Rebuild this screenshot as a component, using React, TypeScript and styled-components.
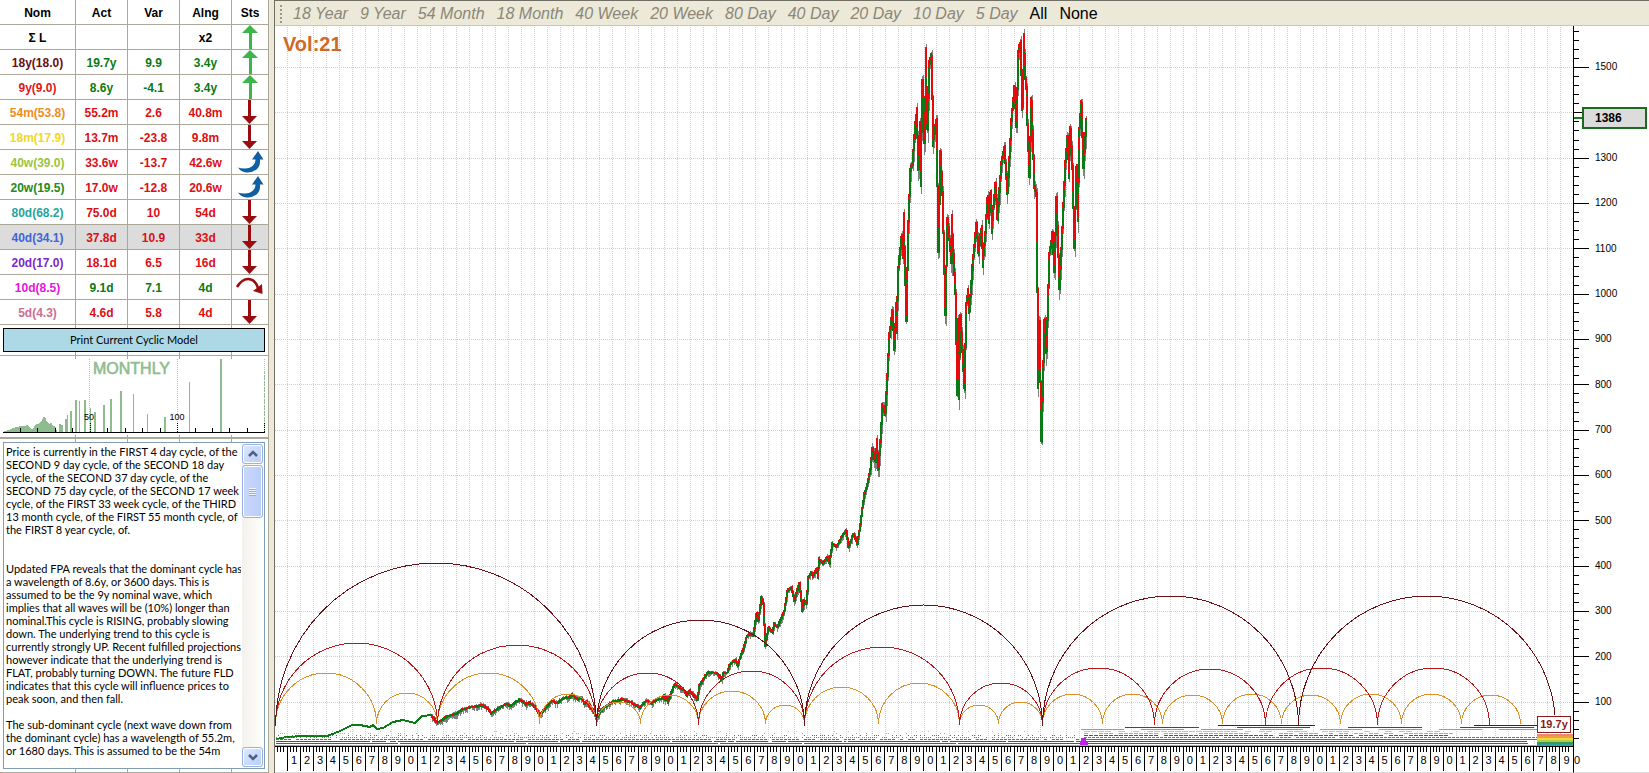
import React from 'react';
import styled, { createGlobalStyle } from 'styled-components';

const GlobalStyle = createGlobalStyle`
  * { box-sizing: border-box; }
  html, body, #root { height: 100%; }
  body {
    margin: 0;
    background: #ece9d8;
    color: #000;
    font-family: "Liberation Sans", Arial, sans-serif;
  }
  button { font-family: inherit; }
`;

const LINE = '#aca899';

/* ---------- window ---------- */

const Window = styled.div`
  display: flex;
  min-height: 100%;
  height: 100vh;
  overflow: hidden;
`;

const SidePane = styled.aside`
  flex: 0 0 269px;
  display: flex;
  flex-direction: column;
  border-right: 1px solid ${LINE};
  border-bottom: 1px solid ${LINE};
  background:
    linear-gradient(${LINE}, ${LINE}) 75px 0 / 1px 100% no-repeat,
    linear-gradient(${LINE}, ${LINE}) 127px 0 / 1px 100% no-repeat,
    linear-gradient(${LINE}, ${LINE}) 179px 0 / 1px 100% no-repeat,
    linear-gradient(${LINE}, ${LINE}) 231px 0 / 1px 100% no-repeat,
    #fff;
`;

const ChartPane = styled.main`
  flex: 1;
  min-width: 0;
  display: flex;
  flex-direction: column;
  margin-left: 5px;
  border-left: 1px solid #716f64;
  border-top: 1px solid #716f64;
  background: #fff;
`;

/* ---------- cycle table ---------- */

const CycleTable = styled.table`
  width: 268px;
  table-layout: fixed;
  border-collapse: separate;
  border-spacing: 0;
  background: #fff;
  font-size: 12px;
  line-height: 14px;
`;

const Col = styled.col<{ $w: number }>`
  width: ${p => p.$w}px;
`;

const HeadCell = styled.th`
  height: 25px;
  padding: 2px 0 0;
  border-right: 1px solid ${LINE};
  border-bottom: 1px solid ${LINE};
  font-weight: 700;
  text-align: center;
  &:last-child { border-right: 0; }
`;

const Row = styled.tr<{ $selected?: boolean }>`
  background: ${p => (p.$selected ? '#dcdcdc' : '#fff')};
`;

const Cell = styled.td<{ $color?: string }>`
  height: 25px;
  padding: 2px 0 0;
  border-right: 1px solid ${LINE};
  border-bottom: 1px solid ${LINE};
  color: ${p => p.$color || '#000'};
  font-weight: 700;
  text-align: center;
`;

const IconCell = styled.td`
  height: 25px;
  padding: 0;
  border-bottom: 1px solid ${LINE};
`;

const StatusIcon = styled.svg`
  display: block;
  width: 36px;
  height: 24px;
`;

type Status = 'up' | 'down' | 'turnUp' | 'turnDown';

function StatusArrow({ kind }: { kind: Status }) {
  return (
    <StatusIcon viewBox="0 0 36 24" role="img" aria-label={kind}>
      {kind === 'up' && <path fill="#3cb54a" d="M18 0 26 8H20V24H17V8H10Z" />}
      {kind === 'down' && <path fill="#990d10" d="M16 0H19V16H25L17.5 24 10 16H16Z" />}
      {kind === 'turnUp' && (
        <path fill="#0f5fa5" d="M6 17.500Q8 18.500 13 18.500Q18 18.500 21 15.500Q23.500 13 23.500 9.500H20L26 1L31.500 9.500H28Q28.500 16 24.500 19.500Q20 23 14.500 22.500Q9 22 6 17.500Z" />
      )}
      {kind === 'turnDown' && (
        <>
          <path fill="none" stroke="#990d10" strokeWidth="2.500" d="M5 12Q10 4 16 4Q23 4 26 13" />
          <path fill="#990d10" d="M21 16 30 9 30.500 19Z" />
        </>
      )}
    </StatusIcon>
  );
}

const G = '#0a7a14';
const R = '#dc0f14';

type Cycle = { nom: string; c: string; act: string; vr: string; al: string; v: string; st: Status; sel?: boolean };

const cycles: Cycle[] = [
  { nom: '18y(18.0)', c: '#6b0f12', act: '19.7y', vr: '9.9', al: '3.4y', v: G, st: 'up' },
  { nom: '9y(9.0)', c: '#e01818', act: '8.6y', vr: '-4.1', al: '3.4y', v: G, st: 'up' },
  { nom: '54m(53.8)', c: '#f08c1e', act: '55.2m', vr: '2.6', al: '40.8m', v: R, st: 'down' },
  { nom: '18m(17.9)', c: '#f2d81e', act: '13.7m', vr: '-23.8', al: '9.8m', v: R, st: 'down' },
  { nom: '40w(39.0)', c: '#9cc43c', act: '33.6w', vr: '-13.7', al: '42.6w', v: R, st: 'turnUp' },
  { nom: '20w(19.5)', c: '#228b22', act: '17.0w', vr: '-12.8', al: '20.6w', v: R, st: 'turnUp' },
  { nom: '80d(68.2)', c: '#28a4a0', act: '75.0d', vr: '10', al: '54d', v: R, st: 'down' },
  { nom: '40d(34.1)', c: '#4164dc', act: '37.8d', vr: '10.9', al: '33d', v: R, st: 'down', sel: true },
  { nom: '20d(17.0)', c: '#7d28c8', act: '18.1d', vr: '6.5', al: '16d', v: R, st: 'down' },
  { nom: '10d(8.5)', c: '#e614dc', act: '9.1d', vr: '7.1', al: '4d', v: G, st: 'turnDown' },
  { nom: '5d(4.3)', c: '#cd6e91', act: '4.6d', vr: '5.8', al: '4d', v: R, st: 'down' },
];

function Cycles() {
  return (
    <CycleTable>
      <colgroup>
        <Col $w={76} /><Col $w={52} /><Col $w={52} /><Col $w={52} /><Col $w={36} />
      </colgroup>
      <thead>
        <tr>
          {['Nom', 'Act', 'Var', 'Alng', 'Sts'].map(h => <HeadCell key={h} scope="col">{h}</HeadCell>)}
        </tr>
      </thead>
      <tbody>
        <Row>
          <Cell>Σ L</Cell><Cell /><Cell /><Cell>x2</Cell>
          <IconCell><StatusArrow kind="up" /></IconCell>
        </Row>
        {cycles.map(c => (
          <Row key={c.nom} $selected={c.sel}>
            <Cell $color={c.c}>{c.nom}</Cell>
            <Cell $color={c.v}>{c.act}</Cell>
            <Cell $color={c.v}>{c.vr}</Cell>
            <Cell $color={c.v}>{c.al}</Cell>
            <IconCell><StatusArrow kind={c.st} /></IconCell>
          </Row>
        ))}
      </tbody>
    </CycleTable>
  );
}

const PrintRow = styled.div`
  flex: none;
  display: flex;
  padding: 3px;
  border-bottom: 1px solid ${LINE};
`;

const PrintButton = styled.button`
  flex: 1;
  height: 24px;
  padding: 0;
  border: 1px solid #000;
  border-radius: 0;
  background: #add8e6;
  color: #000;
  font-family: Lato, "Liberation Sans", sans-serif;
  font-size: 11px;
  line-height: 14px;
`;

/* ---------- spectrum ---------- */

const SpectrumBox = styled.div`
  flex: none;
  padding: 3px 0 2px;
  border-bottom: 2px solid ${LINE};
`;

const SpectrumSvg = styled.svg`
  display: block;
  width: 268px;
  height: 76px;
  background: #fff;
  font-family: "Liberation Sans", Arial, sans-serif;
`;

const humps: [number, number][] = [
  [5, 431], [9, 430], [13, 428], [17, 427], [20, 426], [24, 426], [27, 425], [30, 428], [32, 430],
  [36, 424], [38, 424], [40, 422], [42, 420], [44, 416], [46, 419], [47, 422], [49, 424], [51, 422], [53, 426], [56, 427],
];
const spikes: [number, number, number][] = [
  [59, 424, 2], [61, 425, 2], [65, 419, 2], [67, 415, 1], [70, 411, 2], [75, 400, 2], [79, 401, 1], [84, 400, 2],
  [90, 408, 1], [94, 412, 2], [103, 405, 2], [110, 399, 2], [120, 391, 2], [133, 394, 1], [147, 414, 1],
  [164, 417, 2], [189, 382, 1], [220, 359, 2],
];

function Spectrum() {
  const area = `M3 432 ${humps.map(([x, y]) => `L${x} ${y}`).join(' ')} L57 432 Z`;
  return (
    <SpectrumBox>
      <SpectrumSvg viewBox="0 359 268 76" shapeRendering="crispEdges">
        {[89, 177, 264].map(x => (
          <line key={x} x1={x + 0.5} x2={x + 0.5} y1="359" y2="432" stroke="#bdbdbd" strokeDasharray="1 1" />
        ))}
        <path d={area} fill="#8fbc8f" />
        {spikes.map(([x, y, w]) => <rect key={x} x={x} y={y} width={w} height={432 - y} fill="#8fbc8f" />)}
        <line x1="264.5" x2="264.5" y1="372" y2="432" stroke="#8fbc8f" strokeDasharray="2 1" />
        <rect x="3" y="432" width="262" height="1" />
        {Array.from({ length: 15 }, (_, i) => {
          const x = Math.round(20 + i * 17.45);
          const tall = i % 5 === 4;
          return (
            <line key={i} x1={x + 0.5} x2={x + 0.5} y1={tall ? 423 : 428} y2="432" stroke="#000" strokeDasharray={tall ? '1 1' : undefined} />
          );
        })}
        <text x="93" y="374" fontSize="16" fill="#8fbc8f" stroke="#8fbc8f" strokeWidth="0.600">MONTHLY</text>
        <text x="89" y="420" fontSize="9" textAnchor="middle">50</text>
        <text x="177" y="420" fontSize="9" textAnchor="middle">100</text>
      </SpectrumSvg>
    </SpectrumBox>
  );
}

/* ---------- analysis text ---------- */

const NotesFrame = styled.div`
  flex: 1;
  min-height: 0;
  display: flex;
  margin: 3px;
  border: 1px solid #7f9db9;
  background: #fff;
`;

const Notes = styled.textarea`
  flex: 1;
  min-width: 0;
  margin: 0 0 5px;
  padding: 2px 0 0 2px;
  border: 0;
  outline: 0;
  resize: none;
  overflow: hidden;
  white-space: pre;
  background: #fff;
  color: #000;
  font-family: Lato, "Liberation Sans", sans-serif;
  font-size: 11px;
  line-height: 13px;
`;

const ScrollTrack = styled.div`
  flex: 0 0 21px;
  display: flex;
  flex-direction: column;
  margin: 1px;
  background: linear-gradient(90deg, #f3f1ec, #fefefb);
`;

const ScrollButton = styled.button`
  flex: none;
  display: grid;
  place-items: center;
  height: 20px;
  padding: 0;
  border: 1px solid #98b1e4;
  border-radius: 3px;
  box-shadow: inset 0 0 0 1px #fff;
  background: linear-gradient(135deg, #dfe9fe, #b9cdfa);
`;

const ScrollThumb = styled.div`
  flex: none;
  display: grid;
  place-items: center;
  height: 53px;
  margin-top: 1px;
  margin-bottom: auto;
  border: 1px solid #98b1e4;
  border-radius: 3px;
  box-shadow: inset 0 0 0 1px #fff;
  background: linear-gradient(90deg, #cad8fc, #b9cdfa);
`;

const ScrollGrip = styled.span`
  width: 7px;
  height: 8px;
  background: repeating-linear-gradient(#eef4fe 0 1px, #8cb0f8 1px 2px);
`;

function Chevron({ up }: { up?: boolean }) {
  return (
    <svg width="10" height="8" viewBox="0 0 10 8" fill="none" stroke="#4d6185" strokeWidth="2.500">
      <path d={up ? 'M1 6 5 2 9 6' : 'M1 2 5 6 9 2'} />
    </svg>
  );
}

const notes = `Price is currently in the FIRST 4 day cycle, of the
SECOND 9 day cycle, of the SECOND 18 day
cycle, of the SECOND 37 day cycle, of the
SECOND 75 day cycle, of the SECOND 17 week
cycle, of the FIRST 33 week cycle, of the THIRD
13 month cycle, of the FIRST 55 month cycle, of
the FIRST 8 year cycle, of.


Updated FPA reveals that the dominant cycle has
a wavelength of 8.6y, or 3600 days. This is
assumed to be the 9y nominal wave, which
implies that all waves will be (10%) longer than
nominal.This cycle is RISING, probably slowing
down. The underlying trend to this cycle is
currently strongly UP. Recent fulfilled projections
however indicate that the underlying trend is
FLAT, probably turning DOWN. The future FLD
indicates that this cycle will influence prices to
peak soon, and then fall.

The sub-dominant cycle (next wave down from
the dominant cycle) has a wavelength of 55.2m,
or 1680 days. This is assumed to be the 54m`;

/* ---------- toolbar ---------- */

const Toolbar = styled.div`
  flex: none;
  display: flex;
  align-items: center;
  gap: 12px;
  height: 25px;
  padding: 2px 0 0 5px;
  overflow: hidden;
  border-bottom: 1px solid #c5c8b4;
  background: #ece9d8;
`;

const Grip = styled.span`
  width: 2px;
  height: 18px;
  margin-right: -1px;
  background: repeating-linear-gradient(#9b9886 0 2px, transparent 2px 4px);
`;

const CycleButton = styled.button<{ $plain?: boolean }>`
  flex: none;
  padding: 0;
  border: 0;
  background: none;
  color: ${p => (p.$plain ? '#000' : '#8a8778')};
  font-size: 16px;
  line-height: 20px;
  font-style: ${p => (p.$plain ? 'normal' : 'italic')};
`;

/* ---------- chart ---------- */

const ChartGrid = styled.div`
  flex: 1;
  min-height: 0;
  display: grid;
  grid-template-columns: minmax(0, 1fr) 76px;
  grid-template-rows: minmax(0, 1fr) 27px;
`;

const Plot = styled.div`
  position: relative;
  min-height: 0;
`;

const PlotSvg = styled.svg`
  display: block;
  width: 100%;
  height: 100%;
`;

const VolumeLabel = styled.div`
  position: absolute;
  left: 8px;
  top: 7px;
  color: #cd6a28;
  font-size: 20px;
  line-height: 22px;
  font-weight: 700;
`;

const CycleTag = styled.div`
  position: absolute;
  right: 2px;
  bottom: 13px;
  width: 34px;
  height: 17px;
  border: 1px solid #8b1a1a;
  background: #fff;
  color: #8b1a1a;
  font-size: 11px;
  line-height: 15px;
  font-weight: 700;
  text-align: center;
`;

const PriceAxis = styled.div`
  position: relative;
  display: flex;
  border-left: 1px solid #000;
`;

const Ruler = styled.svg`
  width: 15px;
  height: 100%;
`;

const PriceLabels = styled.div`
  flex: 1;
  display: flex;
  flex-direction: column;
  padding-left: 6px;
  font-size: 10px;
  line-height: 12px;
`;

const PriceBand = styled.span<{ $grow: number }>`
  flex: ${p => p.$grow} 1 0;
  min-height: 0;
  display: flex;
  align-items: center;
`;

const PriceTag = styled.div`
  position: absolute;
  left: 8px;
  top: 11.250%;
  width: 65px;
  height: 22px;
  padding-left: 11px;
  border: 2px solid #1b6b1f;
  background: #dcdcdc;
  font-size: 12px;
  line-height: 19px;
  font-weight: 700;
`;

const YearAxis = styled.div`
  display: flex;
  align-items: flex-start;
  border-top: 1px solid #000;
  border-bottom: 1px solid #ddd;
`;

const YearCell = styled.span`
  flex: 1 1 0;
  min-width: 0;
  height: 24px;
  padding-top: 6px;
  background:
    linear-gradient(#000, #000) 2px 0 / 1px 5px no-repeat,
    linear-gradient(#000, #000) 5px 0 / 1px 5px no-repeat,
    linear-gradient(#000, #000) 8px 0 / 1px 5px no-repeat;
  font-size: 11px;
  line-height: 14px;
  text-align: center;
  & + & { border-left: 1px solid #000; }
`;

const AxisCorner = styled.div`
  padding-top: 7px;
  border-left: 1px solid #000;
  border-bottom: 1px solid #ddd;
  font-size: 11px;
  line-height: 14px;
`;

const X0 = 275;
const STEP = 12.98;
const yOf = (v: number) => 67.5 + (1500 - v) * 0.4533;

/* small deterministic noise source */
function makeRandom(seed: number) {
  let s = seed;
  return () => {
    s = (s * 1664525 + 1013904223) % 4294967296;
    return s / 4294967296;
  };
}

/* swing points of the index, as x,y pairs */
const early = '276,739 287,737 303,736 327,736 330,735 340,731 352,725 360,725 370,727 373,725 377,729 383,728 393,722 403,720 415,723 422,716 432,715';
const middle =
  '432,715 437,722 442,720 448,716 457,713 463,709 470,707 483,705 488,708 492,713 500,707 508,703 510,706 520,699 527,704 530,702 536,707 540,714 547,707 552,700 558,703 563,698 570,697 573,694 578,699 582,697 585,703 587,701 595,712 597,718 600,713 603,708 608,705 613,701 623,699 632,702 640,707 647,700 652,703 658,699 663,698 665,695 ' +
  '665,700 667,697 668,702 675,684 680,687 685,690 687,695 690,690 698,699 700,685 708,672 717,672 722,679 723,673 728,672 730,665 736,659 738,665 745,645 746,638 750,633 754,635 757,613 759,620 762,597 764,603 766,645 769,627 773,632 774,623 778,627 782,617 785,610 788,590 792,587 795,600 800,582 803,610 805,600 807,603 808,578 812,572 813,577 817,568 818,577 819,558 823,563 828,557 830,563 833,543 837,547 842,537 847,530 849,547 854,533 858,543 861,523 863,507 865,493 867,488 871,468';
const late =
  '871,468 873,448 876,460 877,440 879,468 881,440 883,405 886,413 890,335 893,310 895,347 896,303 897,330 899,267 902,237 903,257 904,213 907,320 909,220 911,170 913,163 916,123 917,108 919,167 920,123 921,183 923,80 925,143 926,50 928,127 930,63 932,55 933,143 937,120 939,250 941,153 943,193 946,313 948,217 952,260 952,217 956,293 957,393 958,320 959,397 961,315 965,387 967,303 968,290 970,310 973,267 977,223 979,253 982,228 983,265 986,233 988,197 989,220 991,193 992,230 996,183 998,217 1002,163 1005,147 1008,193 1012,120 1015,87 1017,127 1019,50 1021,43 1023,107 1024,35 1026,77 1027,97 1030,177 1032,100 1035,187 1037,193 1038,387 1040,323 1042,440 1045,320 1047,350 1050,253 1053,233 1055,270 1057,197 1060,287 1063,227 1066,160 1068,137 1069,177 1071,128 1073,167 1075,247 1077,167 1078,220 1079,140 1082,103 1084,167 1087,118';

const parse = (s: string) => s.split(' ').map(p => p.split(',').map(Number) as [number, number]);

function buildBars(points: [number, number][], amp: number, wick: number, seed: number) {
  const rnd = makeRandom(seed);
  let red = '';
  let green = '';
  let gray = '';
  for (let i = 1; i < points.length; i++) {
    const [xa, ya] = points[i - 1];
    const [xb, yb] = points[i];
    const falling = yb > ya;
    const n = Math.max(2, Math.ceil(xb - xa));
    for (let j = 0; j < n; j++) {
      const x = Math.round(xa + ((xb - xa) * j) / n);
      const a = ya + ((yb - ya) * j) / n;
      const b = ya + ((yb - ya) * (j + 1)) / n;
      const top = Math.round(Math.min(a, b) - amp * rnd());
      const bot = Math.round(Math.max(a, b) + amp * rnd()) + 1;
      gray += `M${x + 0.5} ${Math.round(top - wick * rnd() * 0.4)}V${Math.round(bot + wick * rnd())}`;
      const mid = Math.round(top + (bot - top) * (falling ? 0.45 + 0.5 * rnd() : 0.35 * rnd()));
      red += `M${x} ${top}V${mid}`;
      green += `M${x} ${mid}V${bot}`;
    }
  }
  return { red, green, gray };
}

const mid = buildBars(parse(middle), 1, 4, 7);
const high = buildBars(parse(late), 3, 12, 21);

const arcs: { color: string; base: number; spans: [number, number, number][] }[] = [
  {
    color: '#dd9028', base: 724,
    spans: [
      [275, 376, 673], [376, 437, 693], [437, 539, 673], [539, 596, 694], [596, 640, 702], [640, 698, 695], [698, 765, 691],
      [765, 804, 705], [804, 878, 687], [878, 959, 683], [959, 998, 705], [998, 1042, 702], [1042, 1102, 694], [1102, 1162, 694],
      [1162, 1222, 695], [1222, 1281, 694], [1281, 1340, 695], [1340, 1401, 694], [1401, 1461, 694], [1461, 1520, 695],
    ],
  },
  {
    color: '#b81818', base: 725,
    spans: [
      [275, 437, 643], [437, 596, 645], [596, 698, 673], [698, 804, 671], [804, 959, 647], [959, 1042, 683],
      [1042, 1154, 668], [1154, 1265, 669], [1265, 1377, 668], [1377, 1489, 668],
    ],
  },
  {
    color: '#6b1014', base: 726,
    spans: [[275, 596, 563], [596, 804, 620], [804, 1042, 605], [1042, 1298, 596], [1298, 1555, 596]],
  },
];

const projections: [number, number, number, string][] = [
  [1218, 1315, 725, '#6b1014'], [1474, 1537, 725, '#6b1014'],
  [1125, 1199, 727, '#b81818'], [1237, 1310, 727, '#b81818'], [1348, 1422, 727, '#b81818'], [1460, 1534, 727, '#b81818'],
  [1081, 1124, 729, '#dd9028'], [1141, 1184, 729, '#dd9028'], [1201, 1243, 729, '#dd9028'], [1260, 1303, 729, '#dd9028'],
  [1320, 1362, 729, '#dd9028'], [1379, 1422, 729, '#dd9028'], [1439, 1482, 729, '#dd9028'], [1499, 1537, 729, '#dd9028'],
];

/* rows of short marks: start, end, y, colour, mark length, share of the row that is filled, gap between marks */
type MarkRow = [number, number, number, string, number, number, number];
const markRows: MarkRow[] = [
  [276, 1080, 731, '#e0cc40', 1, 0.07, 1], [276, 1080, 733, '#9cc44c', 1, 0.1, 1], [276, 1080, 735, '#2c8c4c', 1, 0.35, 1],
  [276, 1080, 737, '#2c9ca4', 1, 0.7, 1], [276, 1080, 739, '#4468d8', 3, 0.85, 1],
  [276, 1080, 741, '#7d28c8', 2, 0.95, 0], [276, 1080, 743, '#c010c0', 2, 0.99, 0],
  [1084, 1440, 731, '#e4cc3c', 6, 0.6, 1], [1084, 1450, 733, '#9cc43c', 4, 0.7, 1], [1084, 1450, 735, '#188028', 4, 0.95, 1],
  [1084, 1537, 737, '#209498', 3, 0.97, 1],
];

function buildMarks([a, b, y, , len, fill, gap]: MarkRow, seed: number) {
  const rnd = makeRandom(seed * 97 + 5);
  let d = '';
  for (let x = a; x < b; x += len + gap) {
    if (rnd() < fill) d += `M${x} ${y + 0.5}h${len}`;
  }
  return d;
}

const legend = ['#e88a78', '#f0a040', '#f0d840', '#b0cc50', '#3c9a4a', '#30a0a4'];

function PriceChart() {
  return (
    <PlotSvg viewBox="275 26 1298 720" preserveAspectRatio="none" role="img" aria-label="Price with cycle arcs">
      <g shapeRendering="crispEdges" fill="none">
        <g stroke="#cfcfcf" strokeDasharray="1 1">
          {Array.from({ length: 99 }, (_, k) => {
            const x = Math.floor(X0 + STEP * (k + 1)) + 0.5;
            return <line key={k} x1={x} x2={x} y1="27" y2="746" />;
          })}
          {Array.from({ length: 15 }, (_, k) => {
            const y = Math.floor(yOf((k + 1) * 100)) + 0.5;
            return <line key={k} x1="275" x2="1573" y1={y} y2={y} />;
          })}
        </g>
        <polyline points={early} stroke="#0a7a14" strokeWidth="2" />
        {[mid, high].map((b, i) => (
          <g key={i}>
            <path d={b.gray} stroke="#808080" />
            <path d={b.green} stroke="#0a7a14" strokeWidth="2" />
            <path d={b.red} stroke="#e60a0a" strokeWidth="2" />
          </g>
        ))}
        {arcs.map(a => (
          <g key={a.color} stroke={a.color}>
            {a.spans.map(([s, e, top]) => (
              <path key={s} d={`M${s + 0.5} ${a.base}A${(e - s) / 2} ${a.base - top} 0 0 1 ${e + 0.5} ${a.base}`} />
            ))}
          </g>
        ))}
        {markRows.map((r, i) => <path key={i} d={buildMarks(r, i + 1)} stroke={r[3]} />)}
        {projections.map(([s, e, y, c]) => <line key={`${s}-${y}`} x1={s} x2={e} y1={y + 0.5} y2={y + 0.5} stroke={c} />)}
        <path d="M1084 739.500H1537" stroke="#4468d8" />
        <path d="M1084 741.500H1527" stroke="#7d28c8" />
        <path d="M1084 743.500H1528" stroke="#c010c0" />
        <path d="M275 745.500H1537" stroke="#c890b0" />
        <path d="M1081 738h5v3h2v4h-8v-4h1z" fill="#b428e0" />
        {legend.map((c, i) => <rect key={c} x="1537" y={734 + i * 2} width="36" height="2" fill={c} />)}
      </g>
    </PlotSvg>
  );
}

function PriceRuler() {
  const ticks = [];
  for (let v = 20; v <= 1580; v += 20) {
    const y = Math.floor(yOf(v)) + 0.5;
    ticks.push(<line key={v} x1="0" x2={v % 100 === 0 ? 15 : 5} y1={y} y2={y} />);
  }
  return (
    <Ruler viewBox="0 26 15 720" preserveAspectRatio="none" shapeRendering="crispEdges" stroke="#000" aria-hidden="true">
      {ticks}
      <line x1="0" x2="9" y1="118" y2="118" stroke="#1b7a1f" strokeWidth="2" />
    </Ruler>
  );
}

const prices = [1500, 1400, 1300, 1200, 1100, 1000, 900, 800, 700, 600, 500, 400, 300, 200, 100];
const spans = ['18 Year', '9 Year', '54 Month', '18 Month', '40 Week', '20 Week', '80 Day', '40 Day', '20 Day', '10 Day', '5 Day'];

export default function App() {
  return (
    <>
      <GlobalStyle />
      <Window>
        <SidePane>
          <Cycles />
          <PrintRow><PrintButton type="button">Print Current Cyclic Model</PrintButton></PrintRow>
          <Spectrum />
          <NotesFrame>
            <Notes readOnly aria-label="Cycle analysis" value={notes} />
            <ScrollTrack>
              <ScrollButton type="button" aria-label="Scroll up"><Chevron up /></ScrollButton>
              <ScrollThumb><ScrollGrip /></ScrollThumb>
              <ScrollButton type="button" aria-label="Scroll down"><Chevron /></ScrollButton>
            </ScrollTrack>
          </NotesFrame>
        </SidePane>
        <ChartPane>
          <Toolbar role="toolbar" aria-label="Cycles">
            <Grip />
            {spans.map(s => <CycleButton key={s} type="button">{s}</CycleButton>)}
            <CycleButton type="button" $plain>All</CycleButton>
            <CycleButton type="button" $plain>None</CycleButton>
          </Toolbar>
          <ChartGrid>
            <Plot>
              <PriceChart />
              <VolumeLabel>Vol:21</VolumeLabel>
              <CycleTag>19.7y</CycleTag>
            </Plot>
            <PriceAxis>
              <PriceRuler />
              <PriceLabels>
                <PriceBand $grow={1867} />
                {prices.map(p => <PriceBand key={p} $grow={4533}>{p === 1400 ? '' : p}</PriceBand>)}
                <PriceBand $grow={2140} />
              </PriceLabels>
              <PriceTag>1386</PriceTag>
            </PriceAxis>
            <YearAxis>
              {Array.from({ length: 100 }, (_, k) => <YearCell key={k}>{k === 0 ? '' : k % 10}</YearCell>)}
            </YearAxis>
            <AxisCorner>0</AxisCorner>
          </ChartGrid>
        </ChartPane>
      </Window>
    </>
  );
}
